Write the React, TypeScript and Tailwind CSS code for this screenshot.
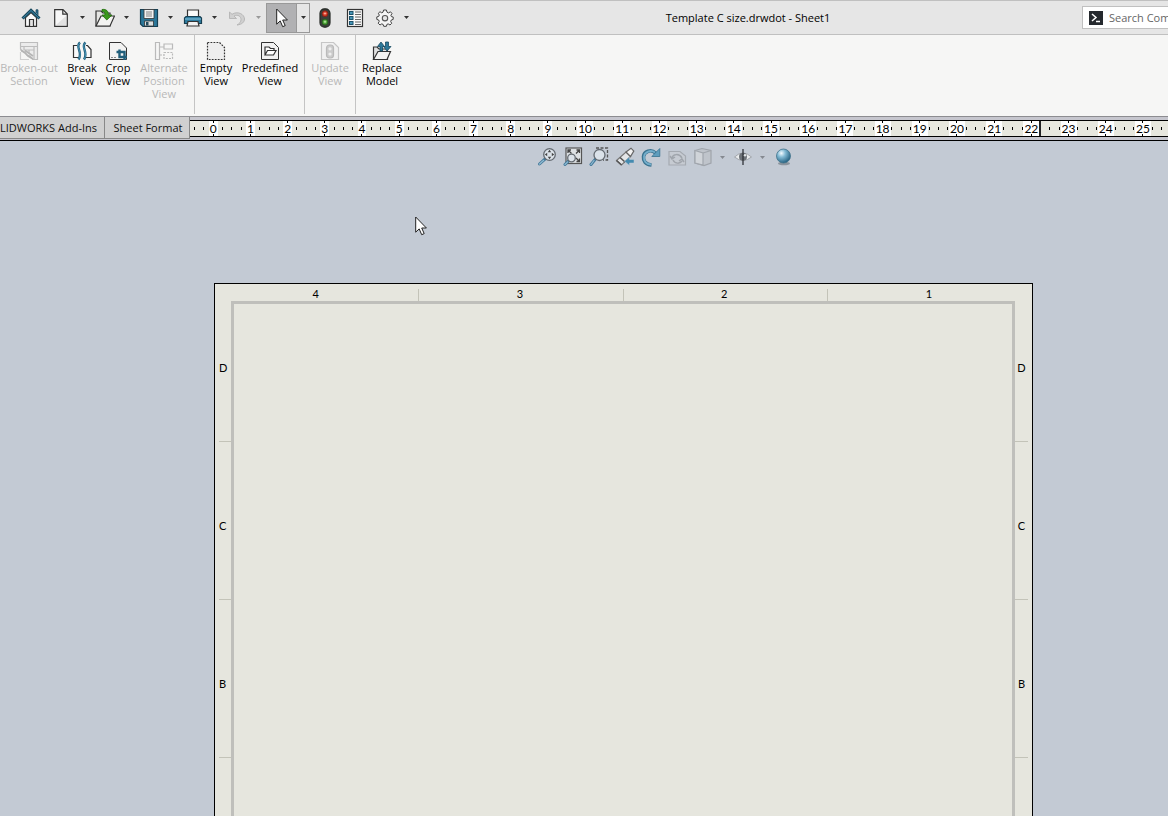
import { ReactNode } from "react";

const SHEET_COLUMNS = ["4", "3", "2", "1"];
const SHEET_ROWS = ["D", "C", "B"];
const RULER_TICKS = Array.from({ length: 105 }, (_, i) => i - 2);

interface IconProps {
  children: ReactNode;
  className?: string;
}

function Icon({ children, className = "h-5 w-5" }: IconProps) {
  return (
    <svg viewBox="0 0 20 20" className={`shrink-0 ${className}`} fill="none" stroke="#333" strokeWidth="1.2" aria-hidden="true">
      {children}
    </svg>
  );
}

const HomeIcon = () => (
  <Icon>
    <path d="M4.5 9.5V18.3H15.500V9.500L10 4.500Z" fill="#fafafa" />
    <path d="M8.500 18V11.500H12.500V18" fill="#e3e3e3" />
    <path d="M15 5V1.800H17V7" fill="#2c6f8f" stroke="#1d4a60" strokeWidth=".8" />
    <path d="M1.500 10.500L10 2.300L18.500 10.500" stroke="#17475c" strokeWidth="3" />
    <path d="M2 10.200L10 2.500L18 10.200" stroke="#3f8db0" strokeWidth="1" />
  </Icon>
);

const NewIcon = () => (
  <Icon>
    <path d="M3.700 1.700H12L16.300 6V18.300H3.700Z" fill="#f7f7f7" />
    <path d="M11.800 2V6.200H16" />
    <path d="M5 17L15 8V17Z" fill="#e2e2e2" stroke="none" />
  </Icon>
);

const OpenIcon = () => (
  <Icon>
    <path d="M1 18V3H6L8 5H15V18Z" fill="#e5e5e3" />
    <path d="M1 18L6 8H19.500L15 18Z" fill="#f3f3f1" />
    <path d="M7 1.500C11 .8 13.500 3 13.500 7H17L11.800 12L7 7H10C10 5 9.500 3.500 7 3.300Z" fill="#3b981c" stroke="#216b0c" strokeWidth=".8" />
  </Icon>
);

const SaveIcon = () => (
  <Icon>
    <path d="M1.500 1.500H18.500V18.500H4L1.500 16Z" fill="#2c7799" stroke="#173f52" />
    <path d="M5 1.500H15V10.500H5Z" fill="#f2f2f2" strokeWidth=".8" />
    <path d="M7 4H13M7 6H13M7 8H13" stroke="#777" strokeWidth=".9" />
    <path d="M5.500 13H14.500V18H5.500Z" fill="#d9dfe2" strokeWidth=".8" />
    <path d="M7 14H9.500V17.500H7Z" fill="#244a5b" stroke="none" />
  </Icon>
);

const PrintIcon = () => (
  <Icon>
    <path d="M4.500 9V2H15.500V9" fill="#fbfbfb" />
    <path d="M3 8.500H17L18.500 10V15.500H1.500V10Z" fill="#2f7da0" stroke="#173f52" />
    <path d="M2 11H18" stroke="#8cc6df" strokeWidth="1" />
    <path d="M5 13.500H15L16 18H4Z" fill="#f3f3f3" />
  </Icon>
);

const UndoIcon = () => (
  <Icon>
    <path d="M2.500 4V10.500H9.500L7 8C11 6 14 8.500 14 11.500C14 14 12.500 15.500 10 17C15 16.500 17.500 14 17.500 11C17.500 6.500 11 2.500 5 6.300Z" fill="#d0d0d0" stroke="#b3b3b3" strokeWidth=".9" />
  </Icon>
);

const TrafficIcon = () => (
  <Icon>
    <rect x="5" y=".8" width="10" height="18.400" rx="4.500" fill="#3a3f3b" stroke="#252925" />
    <circle cx="10" cy="5.700" r="2.900" fill="#d23a26" stroke="#7b1c13" strokeWidth=".8" />
    <circle cx="10" cy="14" r="2.900" fill="#4a9f36" stroke="#235b18" strokeWidth=".8" />
    <path d="M8.700 5.500H11.300M10 4.200V6.800" stroke="#ffb6a5" strokeWidth=".8" />
    <path d="M8.700 13.800H11.300M10 12.500V15.100" stroke="#c8f5ae" strokeWidth=".8" />
  </Icon>
);

const OptionsListIcon = () => (
  <Icon>
    <rect x="2.500" y="1.500" width="15" height="17" fill="#fafafa" />
    {[3, 8, 13].map((y) => (
      <g key={y}>
        <rect x="4.500" y={y + 0.5} width="3.500" height="3" fill="#4794b6" stroke="#1c526b" strokeWidth="1" />
        <path d={`M10 ${y + 1}H16M10 ${y + 3.5}H16`} stroke="#555" strokeWidth=".9" />
      </g>
    ))}
  </Icon>
);

const GearIcon = () => (
  <Icon>
    <path
      d="M8.600 2H11.400L12 4.200L13.500 4.900L15.500 3.800L17 5.500L15.900 7.300L16.400 8.600L18.200 9V11.400L16.300 12L15.700 13.500L16.700 15.300L15 17L13.200 15.900L11.900 16.400L11.400 18.300H8.700L8.100 16.400L6.700 15.900L5 17L3.200 15.200L4.200 13.500L3.700 12L1.800 11.400V8.900L3.700 8.400L4.300 7L3.300 5.300L5 3.700L6.700 4.800L8 4.200Z"
      fill="#f5f5f5"
      stroke="#444"
      strokeWidth="1"
    />
    <circle cx="10" cy="10.200" r="2.700" fill="#e6e6e6" stroke="#555" strokeWidth="1.100" />
  </Icon>
);

function Pointer({ className }: { className: string }) {
  return (
    <svg viewBox="0 0 12 20" className={className} aria-hidden="true">
      <path d="M.7 1V16.200L4.200 12.900L6.700 18.700L9.200 17.600L6.700 12H11.400Z" fill="#fff" stroke="#222" strokeWidth="1" />
    </svg>
  );
}

const BrokenOutIcon = () => (
  <Icon>
    <path d="M1.500 1.500H18.500V18.500H14L11 15L8 14L6 11L3 10.500L1.500 8Z" fill="#ececec" stroke="#bdbdbd" />
    <path d="M1.500 5.500H18.500M5 5.500V9H15V5.500M10 9V12M15 9V18" stroke="#bdbdbd" />
    <path d="M2 9L6 12L9 15L14 18M6 9.500L14 15" stroke="#b4b4b4" strokeWidth="1.600" />
    <path d="M1.500 11V18.500H10" stroke="#cfcfcf" />
  </Icon>
);

const BreakIcon = () => (
  <Icon>
    <path d="M5 4.500H1.500V16.500H7M14 4.500H15.500L19 8.500V16.500H14" fill="#fafafa" />
    <path d="M8 1.500C2.500 6 11.500 11 6.500 18.500M13.500 1.500C8 6 17 11 12 18.500" stroke="#24617d" strokeWidth="2.400" />
    <path d="M7.800 2C2.800 6.200 11.500 11 6.700 18M13.300 2C8.300 6.200 17 11 12.200 18" stroke="#4ea0c3" strokeWidth=".8" />
  </Icon>
);

const CropIcon = () => (
  <Icon>
    <path d="M1.500 1.500H13L18.500 7V18.500H1.500Z" fill="#f3f3f2" strokeWidth="1" />
    <path d="M3 16.500H9" stroke="#888" strokeDasharray="2 1" />
    <path d="M11.500 8.500V16H19M8.500 11H16.500V19" stroke="#215f7b" strokeWidth="2.400" />
  </Icon>
);

const AlternateIcon = () => (
  <Icon>
    <path d="M1.500 1.500H5.500V18.500H1.500ZM5.500 6H10M10 3H18.500V8H10Z" stroke="#bababa" />
    <path d="M6 14H10M10 11.500H18.500V17.500H10Z" stroke="#bababa" strokeDasharray="2 1.200" />
  </Icon>
);

const EmptyIcon = () => (
  <Icon>
    <path d="M1.500 1.500H13.500L18.500 6.500V18.500H1.500Z" fill="#eee" strokeDasharray="1.800 1.200" />
  </Icon>
);

const PredefinedIcon = () => (
  <Icon>
    <path d="M1.500 1.500H13.500L18.500 6.500V18.500H1.500Z" fill="#f1f1f1" strokeWidth="1" />
    <path d="M5 14V6H9L10.500 7.500H14V9.500M5 14L7.500 9.500H16L13.500 14Z" fill="#fff" />
  </Icon>
);

const UpdateIcon = () => (
  <Icon>
    <path d="M1.500 1.500H13.500L18.500 6.500V18.500H1.500Z" fill="#f1f1f1" stroke="#c6c6c6" />
    <rect x="6.500" y="4" width="7" height="13" rx="3" fill="#ccc" stroke="#bababa" />
    <circle cx="10" cy="7.800" r="1.600" fill="#efefef" stroke="none" />
    <circle cx="10" cy="13" r="1.600" fill="#efefef" stroke="none" />
  </Icon>
);

const ReplaceIcon = () => (
  <Icon>
    <path d="M1.500 18.500V6H5L7 8H15.500V18.500Z" fill="#e1e1e1" />
    <path d="M1.500 18.500L6 10.500H18.500L15 18.500Z" fill="#f3f3f2" />
    <path d="M8 10V5.500H5.500L9 1L12.500 5.500H10.500V10ZM13.500 1H16.500V5.500H19L15 10L11.500 5.500H13.500Z" fill="#2d7899" stroke="#184a61" strokeWidth=".8" />
  </Icon>
);

function Lens({ cx, cy, r, x, y }: { cx: number; cy: number; r: number; x: number; y: number }) {
  return (
    <>
      <path d={`M${x} ${y}L${cx - r * 0.7} ${cy + r * 0.7}`} stroke="#44799a" strokeWidth="3" strokeLinecap="round" />
      <path d={`M${x} ${y}L${cx - r} ${cy + r}`} stroke="#8fbbd2" strokeWidth="1.200" strokeLinecap="round" />
      <circle cx={cx} cy={cy} r={r} fill="#dbe2e9" stroke="#646a71" strokeWidth="1.300" />
    </>
  );
}

const ZoomFitIcon = () => (
  <Icon>
    <Lens cx={12.5} cy={7.5} r={5.800} x={2.500} y={17} />
    <path d="M12.500 2.800L14.200 5.200H10.800ZM12.500 12.200L14.200 9.800H10.800ZM7.800 7.500L10.200 5.800V9.200ZM17.200 7.500L14.800 5.800V9.200Z" fill="#444" stroke="none" />
  </Icon>
);

const ZoomSheetIcon = () => (
  <Icon>
    <rect x="3" y="1" width="15.500" height="15.500" fill="#dde1e4" stroke="#555" />
    <path d="M5 6V3H8M5.500 3.500L8.500 6.500M13.500 3H16.500V6M16 3.500L13 6.500M16.500 11.500V14.500H13.500M16 14L13 11" stroke="#444" strokeWidth="1.300" />
    <Lens cx={8.500} cy={11} r={3.800} x={2} y={17.500} />
  </Icon>
);

const ZoomAreaIcon = () => (
  <Icon>
    <path d="M7 1H18.500V13H14" stroke="#555" strokeWidth="1.300" strokeDasharray="3 1.500" />
    <Lens cx={10.500} cy={8} r={5.500} x={2} y={17.500} />
  </Icon>
);

const PreviousViewIcon = () => (
  <Icon>
    <path d="M1.500 13.500L11 5L15.500 9.500L6.500 18Z" fill="#e4e6e8" stroke="#777" />
    <path d="M11 5L16 1.200L18.800 4L15.500 9.500Z" fill="#f3f3f3" stroke="#666" />
    <path d="M1.500 13.500L6.500 18M5 10.500L10 15" stroke="#555" strokeWidth="1.600" />
    <path d="M19 12.500V16H14.500V18.500L9.500 14.300L14.500 10V12.500Z" fill="#448bb0" stroke="#c3cad4" strokeWidth=".5" />
  </Icon>
);

const RotateIcon = () => (
  <Icon>
    <path d="M10.500 18C4.500 17.500 2 14 2.500 9.500C3 4.500 10 1.500 14.500 6" stroke="#39728f" strokeWidth="3.600" />
    <path d="M10 17.500C5 17.200 2.500 14 3 9.500C3.500 5 10 2.200 14 5.500" stroke="#74aecb" strokeWidth="1.800" />
    <path d="M18.800 1.500V9.500H10.800Z" fill="#5e9dbd" stroke="#39728f" strokeWidth=".8" />
  </Icon>
);

const DrawingViewIcon = () => (
  <Icon>
    <path d="M2 4.500H13L18.500 9V18H2Z" fill="#c6cbd2" stroke="#a5aab1" />
    <path d="M15 11C12 6 6 7 5 11M3 9L5 12L8 10M6 13C8 17 13 17 15 14M17 15L15 12L12 14" stroke="#a0a5ac" strokeWidth="1.500" />
  </Icon>
);

const DisplayStyleIcon = () => (
  <Icon>
    <path d="M2 3.500L9 1.500L18 3.500V16L11 18.500L2 16Z" fill="#bfc4cb" stroke="#9fa4ab" />
    <path d="M2 3.500L10 6V18L2 16Z" fill="#d0d4d9" stroke="#a1a6ad" />
    <path d="M10 6L18 3.500" stroke="#a1a6ad" />
  </Icon>
);

const EyeIcon = () => (
  <Icon>
    <path d="M1.500 10Q10 2 18.500 10Q10 17 1.500 10Z" fill="#e9ebed" stroke="#9a9ea4" strokeWidth=".9" />
    <circle cx="10" cy="9.800" r="4" fill="#6d7278" stroke="none" />
    <path d="M10 2V18" stroke="#303439" strokeWidth="1.300" />
    <circle cx="12" cy="8.300" r="1.200" fill="#dfe3e6" stroke="none" />
  </Icon>
);

const SceneIcon = () => (
  <Icon>
    <defs>
      <radialGradient id="scene" cx=".35" cy=".3" r=".7">
        <stop stopColor="#f5fbff" />
        <stop offset=".4" stopColor="#84bbd5" />
        <stop offset="1" stopColor="#2a6686" />
      </radialGradient>
    </defs>
    <ellipse cx="11" cy="16.500" rx="6" ry="1.800" fill="#8b949d" stroke="none" />
    <circle cx="10.500" cy="9" r="7" fill="url(#scene)" stroke="#41738c" strokeWidth=".8" />
  </Icon>
);

function Caret({ label, className, color = "text-[#333]" }: { label: string; className: string; color?: string }) {
  return (
    <button type="button" aria-label={label} className={`flex shrink-0 items-center justify-center ${color} ${className}`}>
      <svg viewBox="0 0 5 3" className="h-[3px] w-[5px] shrink-0" aria-hidden="true">
        <path d="M0 0H5L2.500 3Z" fill="currentColor" />
      </svg>
    </button>
  );
}

function ToolButton({ label, className, children }: { label: string; className: string; children: ReactNode }) {
  return (
    <button type="button" aria-label={label} className={`flex shrink-0 items-center justify-center ${className}`}>
      {children}
    </button>
  );
}

const fileTools = [
  { label: "New", icon: <NewIcon /> },
  { label: "Open", icon: <OpenIcon /> },
  { label: "Save", icon: <SaveIcon /> },
  { label: "Print", icon: <PrintIcon /> },
  { label: "Undo", icon: <UndoIcon />, caret: "text-[#999]" },
];

function TitleBar() {
  return (
    <header className="flex h-[35px] shrink-0 items-center border-y border-[#c0c0c0] bg-[#e6e6e6]">
      <ToolButton label="Home" className="mr-1 ml-[18px] h-7 w-[26px]">
        <HomeIcon />
      </ToolButton>
      <div className="flex shrink-0 gap-0.5">
        {fileTools.map((tool) => (
          <div key={tool.label} className="flex">
            <ToolButton label={tool.label} className="h-7 w-[26px]">
              {tool.icon}
            </ToolButton>
            <Caret label={`${tool.label} options`} className="w-4" color={tool.caret} />
          </div>
        ))}
      </div>
      <div className="flex h-[30px] w-11 shrink-0 border border-[#999]">
        <ToolButton label="Select" className="w-[30px] border-r border-[#999] bg-[#b1b1b3]">
          <Pointer className="h-5 w-3" />
        </ToolButton>
        <Caret label="Select options" className="w-3" />
      </div>
      <ToolButton label="Rebuild" className="h-7 w-[30px]">
        <TrafficIcon />
      </ToolButton>
      <ToolButton label="File properties" className="h-7 w-[30px]">
        <OptionsListIcon />
      </ToolButton>
      <ToolButton label="Options" className="h-7 w-[30px]">
        <GearIcon />
      </ToolButton>
      <Caret label="More options" className="h-7 w-3" />
      <h1 className="min-w-0 flex-1 truncate pt-0.5 pl-0.5 text-center text-[11px] text-black">Template C size.drwdot - Sheet1</h1>
      <label className="flex h-[23px] w-[86px] shrink-0 items-center overflow-hidden border border-r-0 border-[#c0c0c0] bg-white pl-1.5">
        <svg viewBox="0 0 14 14" className="h-3.5 w-3.5 shrink-0" aria-hidden="true">
          <rect width="14" height="14" fill="#25292e" />
          <path d="M3 3L7 6.500L3 10M7 10.500H11" fill="none" stroke="#fff" strokeWidth="1.500" />
        </svg>
        <input
          aria-label="Search Commands"
          placeholder="Search Commands"
          className="ml-1.5 w-32 shrink-0 pt-0.5 text-[11px] outline-none placeholder:text-[#666]"
        />
      </label>
    </header>
  );
}

interface Command {
  lines: string[];
  icon: ReactNode;
  width: string;
  disabled?: boolean;
}

const commandGroups: { className: string; commands: Command[] }[] = [
  {
    className: "border-r pr-0.5",
    commands: [
      { lines: ["Broken-out", "Section"], icon: <BrokenOutIcon />, width: "w-[58px] mr-1.5", disabled: true },
      { lines: ["Break", "View"], icon: <BreakIcon />, width: "w-9" },
      { lines: ["Crop", "View"], icon: <CropIcon />, width: "w-9" },
      { lines: ["Alternate", "Position", "View"], icon: <AlternateIcon />, width: "w-14", disabled: true },
    ],
  },
  {
    className: "border-r pr-px",
    commands: [
      { lines: ["Empty", "View"], icon: <EmptyIcon />, width: "w-[42px]" },
      { lines: ["Predefined", "View"], icon: <PredefinedIcon />, width: "w-[66px]" },
    ],
  },
  {
    className: "border-r",
    commands: [{ lines: ["Update", "View"], icon: <UpdateIcon />, width: "w-[50px]", disabled: true }],
  },
  {
    className: "",
    commands: [{ lines: ["Replace", "Model"], icon: <ReplaceIcon />, width: "w-[52px]" }],
  },
];

function Ribbon() {
  return (
    <div className="flex h-[82px] shrink-0 border-b border-[#8c8c90] bg-[#f6f6f5] pb-0.5">
      {commandGroups.map((group, i) => (
        <div key={i} className={`flex shrink-0 border-[#c4c4c4] ${group.className}`}>
          {group.commands.map((command) => (
            <button
              key={command.lines.join(" ")}
              type="button"
              disabled={command.disabled}
              className={`flex shrink-0 flex-col items-center pt-1.5 text-[11px] leading-[13px] whitespace-nowrap text-black disabled:text-[#b8b8b8] ${command.width}`}
            >
              {command.icon}
              {command.lines.map((line) => (
                <span key={line}>{line}</span>
              ))}
            </button>
          ))}
        </div>
      ))}
    </div>
  );
}

function Ruler() {
  return (
    <div className="relative mt-[3px] flex h-[17px] min-w-0 flex-1 overflow-hidden border-y border-black bg-[#e7e7de] pr-0.5 font-[Lato,sans-serif]">
      {RULER_TICKS.map((tick) => (
        <div key={tick} className="flex min-w-0 flex-1 items-center justify-center">
          {tick % 4 === 0 ? (
            <span className="flex h-full shrink-0 flex-col items-center justify-between bg-white px-px text-[12px] leading-[11px] text-black">
              <i className="h-0.5 w-px bg-black" />
              {tick / 4}
              <i className="h-0.5 w-px bg-black" />
            </span>
          ) : (
            <i className="h-[3px] w-px shrink-0 bg-black" />
          )}
        </div>
      ))}
      <i className="absolute inset-y-0 right-[127px] w-0.5 bg-[#222]" />
    </div>
  );
}

function TabRow() {
  return (
    <div className="flex h-6 shrink-0 border-b border-black bg-[#c6c6ce]">
      <nav className="flex h-[22px] w-[190px] shrink-0 border-b border-[#888] text-[11px] text-[#111]">
        <button type="button" className="flex w-[105px] shrink-0 items-center justify-end overflow-hidden border-r border-[#888] bg-[#d0d0d0] pt-px pr-[7px] whitespace-nowrap">
          SOLIDWORKS Add-Ins
        </button>
        <button type="button" className="flex flex-1 items-center justify-center border-r border-[#888] bg-[#d0d0d0] pt-px pl-0.5 whitespace-nowrap">
          Sheet Format
        </button>
      </nav>
      <Ruler />
    </div>
  );
}

function ViewToolbar() {
  return (
    <div className="flex h-8 shrink-0 justify-center pl-[166px]">
      <ToolButton label="Zoom to fit" className="w-[26px]"><ZoomFitIcon /></ToolButton>
      <ToolButton label="Zoom to sheet" className="w-[26px]"><ZoomSheetIcon /></ToolButton>
      <ToolButton label="Zoom to area" className="w-[26px]"><ZoomAreaIcon /></ToolButton>
      <ToolButton label="Previous view" className="w-[26px]"><PreviousViewIcon /></ToolButton>
      <ToolButton label="Rotate view" className="w-[26px]"><RotateIcon /></ToolButton>
      <ToolButton label="3D drawing view" className="w-[26px]"><DrawingViewIcon /></ToolButton>
      <ToolButton label="Display style" className="w-[26px]"><DisplayStyleIcon /></ToolButton>
      <Caret label="Display style options" className="w-3" color="text-[#858990]" />
      <ToolButton label="Hide or show items" className="w-[30px]"><EyeIcon /></ToolButton>
      <Caret label="Hide or show options" className="w-2" color="text-[#858990]" />
      <ToolButton label="Apply scene" className="w-[34px]"><SceneIcon /></ToolButton>
    </div>
  );
}

function ZoneLetters({ className }: { className: string }) {
  return (
    <div className={`shrink-0 ${className}`}>
      {SHEET_ROWS.map((row) => (
        <div key={row} className="h-[158px] border-b border-[#c3c3b8] pt-[76px] leading-4 first:h-[141px] first:pt-[59px]">
          {row}
        </div>
      ))}
    </div>
  );
}

function DrawingSheet() {
  return (
    <div className="mt-[110px] mr-[135px] ml-[214px] flex flex-1 flex-col border border-b-0 border-black bg-[#e6e6de] font-[Lato,sans-serif] text-[11px] text-black">
      <div className="grid h-[17px] shrink-0 grid-cols-4 pt-[5px]">
        {SHEET_COLUMNS.map((column) => (
          <div key={column} className="border-r border-[#c3c3b8] pr-0.5 text-center leading-[10px] last:border-r-0">
            {column}
          </div>
        ))}
      </div>
      <div className="flex flex-1">
        <ZoneLetters className="ml-1 w-3" />
        <div className="flex-1 border-[3px] border-b-0 border-[#bfbfbb]" />
        <ZoneLetters className="mr-1 w-[13px] text-center" />
      </div>
    </div>
  );
}

export default function App() {
  return (
    <div className="relative flex h-screen flex-col overflow-hidden bg-[#c3cad4] font-['Open_Sans','Noto_Sans',sans-serif]">
      <TitleBar />
      <Ribbon />
      <TabRow />
      <main className="flex min-h-0 flex-1 flex-col overflow-hidden">
        <ViewToolbar />
        <DrawingSheet />
      </main>
      <Pointer className="absolute top-[216px] left-[415px] h-5 w-3" />
    </div>
  );
}
